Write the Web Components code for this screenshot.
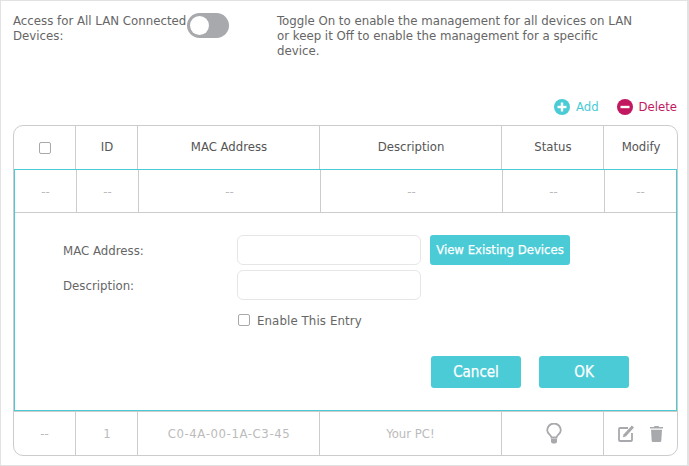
<!DOCTYPE html>
<html><head><meta charset="utf-8"><style>
html,body{margin:0;padding:0;background:#fff}
body{width:689px;height:466px;overflow:hidden;font:13px "DejaVu Sans",sans-serif;font-stretch:condensed}
</style></head><body>
<acl-panel></acl-panel>
<script>
const FONT='"DejaVu Sans","Liberation Sans",sans-serif';
function def(name,html,setup){customElements.define(name,class extends HTMLElement{constructor(){super();this.attachShadow({mode:'open'}).innerHTML=html;}connectedCallback(){setup&&setup(this);}});}
def('ui-toggle',`<style>:host{display:block;width:42px;height:25px;flex:none}
.t{box-sizing:border-box;width:42px;height:25px;border-radius:13px;background:#a7a9ac;padding:3px}
.k{width:19px;height:19px;border-radius:50%;background:#fff}</style><div class="t"><div class="k"></div></div>`);
def('ui-check',`<style>:host{display:block;flex:none;width:12px;height:12px;box-sizing:border-box;border:1px solid #a7a9ac;border-radius:2px;background:#fff}</style>`);
def('ui-button',`<style>:host{display:flex;align-items:center;justify-content:center;background:#4acbd6;color:#fff;border-radius:3px;font-family:${FONT};font-stretch:condensed}</style><slot></slot>`);
def('ui-input',`<style>:host{display:block;box-sizing:border-box;width:184px;height:30px;border:1px solid #e6e6e6;border-radius:6px;background:#fff}</style>`);
def('ui-action',`<style>:host{display:flex;align-items:center;gap:5.500px;font:13px ${FONT};font-stretch:condensed;color:var(--c)}svg{display:block;margin-top:2px}</style>
<svg width="16" height="16" viewBox="0 0 16 16"><circle cx="8" cy="8" r="8" fill="currentColor"/><path d="M3.500 6.800h9v2.400h-9z" fill="#fff"/><path class="v" d="M6.800 3.500h2.400v9H6.800z" fill="#fff"/></svg><slot></slot>`,el=>{if(el.hasAttribute('minus'))el.shadowRoot.querySelector('.v').remove();});
def('data-row',`<style>:host{display:grid;box-sizing:border-box;grid-template-columns:61px 62px 182px 182px 102px 1fr;height:var(--h);text-align:center;font-size:13px}
::slotted(*){display:flex;align-items:center;justify-content:center;border-left:1px solid #ccc;box-sizing:border-box;min-width:0}
::slotted(:first-child){border-left:0}</style><slot></slot>`);
def('entry-form',`<style>:host{display:block;box-sizing:border-box;height:197px;color:#666;font-size:13.100px}
.g{display:grid;grid-template-columns:165px 184px auto;column-gap:9px;row-gap:5px;padding:22px 0 0 48px;justify-content:start;align-items:center}
.l{height:30px;display:flex;align-items:center}
.c{grid-column:2/4;display:flex;align-items:center;gap:7px;height:30px;margin-left:1px;letter-spacing:.1px}
.b{display:flex;justify-content:flex-end;gap:18px;padding:21px 47px 0 0}
ui-button.v{box-sizing:border-box;width:140px;height:30px;padding-bottom:2px;font-size:13px;-webkit-text-stroke:.25px #fff}
ui-button.m{width:90px;height:32px;font-size:15px;-webkit-text-stroke:.25px #fff}
</style>
<div class="g"><div class="l">MAC Address:</div><ui-input></ui-input><ui-button class="v">View Existing Devices</ui-button>
<div class="l">Description:</div><ui-input style="grid-column:2/3"></ui-input><span></span>
<span></span><div class="c"><ui-check></ui-check><span>Enable This Entry</span></div></div>
<div class="b"><ui-button class="m">Cancel</ui-button><ui-button class="m">OK</ui-button></div>`);
def('icon-bulb',`<style>:host{display:block;margin-left:2px}svg{display:block}</style><svg width="16" height="21" viewBox="0 0 16 21" fill="none"><path d="M5.500 14.500c0-2.500-4.300-3.600-4.300-7.200a6.800 6.800 0 0 1 13.600 0c0 3.600-4.300 4.700-4.300 7.200z" stroke="#a7a9ac" stroke-width="1.800"/><path d="M5 15.800h6v2.700a2 2 0 0 1-2 2H7a2 2 0 0 1-2-2z" fill="#a7a9ac"/></svg>`);
def('icon-edit',`<style>:host{display:block}svg{display:block}</style><svg width="16" height="17" viewBox="0 0 16 17" fill="none"><path d="M14 8v7a1 1 0 0 1-1 1H2a1 1 0 0 1-1-1V4a1 1 0 0 1 1-1h8" stroke="#a7a9ac" stroke-width="1.800"/><path d="M5.500 9.500 13.800.5 16 2.500 7.800 11.500l-3 .8z" fill="#a7a9ac"/></svg>`);
def('icon-trash',`<style>:host{display:block}svg{display:block}</style><svg width="13" height="16" viewBox="0 0 13 16"><path d="M4.500 0h4l.5 1H13v1.500H0V1h4zM1 3.800h11l-.7 11a1.300 1.300 0 0 1-1.300 1.200H3a1.300 1.300 0 0 1-1.300-1.200z" fill="#a7a9ac"/></svg>`);
def('acl-panel',`<style>
:host{display:block;box-sizing:border-box;width:689px;height:466px;border:solid #e2e2e2;border-width:1px 2px 1px 1px;font-family:${FONT};font-stretch:condensed;color:#666;background:#fff}
.top{display:flex;padding:12px 0 0 12px;height:83px;box-sizing:border-box;font-size:13.100px;line-height:15px}
.lab{width:174px;flex:none}
.desc{margin-left:48px;width:362px}
.acts{display:flex;justify-content:flex-end;gap:18.500px;padding:14px 10px 0 0;height:41px;box-sizing:border-box}
.acts ui-action{height:16px}
.tb{box-sizing:border-box;width:665px;margin-left:12px;height:331px;border:1px solid #ccc;border-radius:10px}
.hd{--h:43px;color:#555}
.hd div+div{padding-bottom:2px;padding-left:1px}
.teal{box-sizing:border-box;border:1px solid #4acbd6;height:242px}
.gr{--h:43px;border-bottom:1px solid #ccc;color:#bbb}
.ft{--h:44px;color:#bbb;border-top:1px solid #ccc}
.icons{gap:16px}
.mac{letter-spacing:.6px;padding-left:1px}
.one{padding-left:1px}
</style>
<div class="top"><div class="lab">Access for All LAN Connected Devices:</div><ui-toggle></ui-toggle><div class="desc">Toggle On to enable the management for all devices on LAN or keep it Off to enable the management for a specific device.</div></div>
<div class="acts"><ui-action style="--c:#4acbd6">Add</ui-action><ui-action minus style="--c:#c2185f">Delete</ui-action></div>
<div class="tb">
<data-row class="hd"><div><ui-check></ui-check></div><div>ID</div><div>MAC Address</div><div>Description</div><div>Status</div><div>Modify</div></data-row>
<div class="teal">
<data-row class="gr"><div>--</div><div>--</div><div>--</div><div>--</div><div>--</div><div>--</div></data-row>
<entry-form></entry-form>
</div>
<data-row class="ft"><div>--</div><div class="one">1</div><div class="mac">C0-4A-00-1A-C3-45</div><div>Your PC!</div><div><icon-bulb></icon-bulb></div><div class="icons"><icon-edit></icon-edit><icon-trash></icon-trash></div></data-row>
</div>`);
</script>
</body></html>
